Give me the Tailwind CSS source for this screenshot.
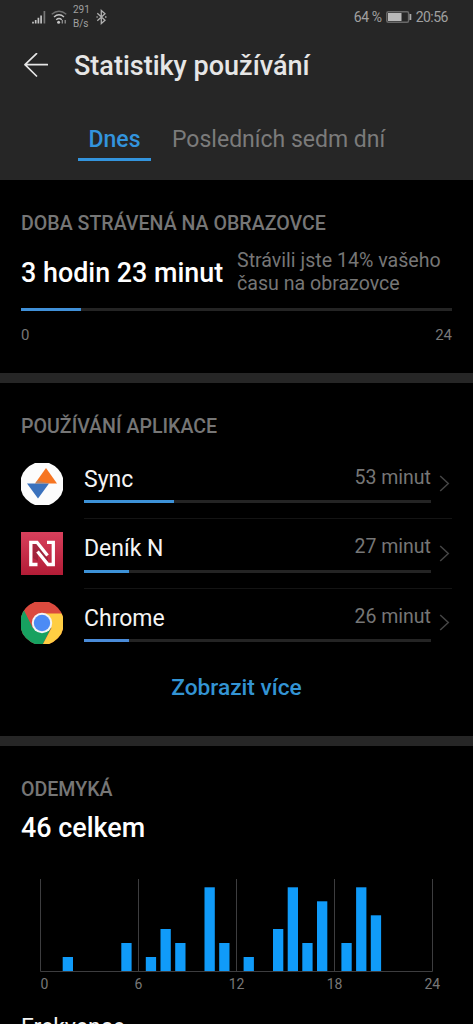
<!DOCTYPE html>
<html lang="cs">
<head>
<meta charset="utf-8">
<meta name="viewport" content="width=device-width, initial-scale=1">
<title>Statistiky používání</title>
<script src="https://cdn.jsdelivr.net/npm/@tailwindcss/browser@4"></script>
</head>
<body class="bg-black">
<div class="w-[473px] h-[1024px] overflow-hidden flex flex-col bg-black text-white font-['Roboto',sans-serif] whitespace-nowrap">

  <header class="h-[180px] shrink-0 bg-[#262626] flex flex-col">
    <div class="h-[34px] flex items-center justify-between pl-8 pr-[25px] text-[#a0a0a0]">
      <div class="flex items-center">
        <svg class="w-[15px] h-4" viewBox="0 0 15 16" fill="none" stroke-width="1.7"><path stroke="#c4c4c4" d="M1 14.5v-1.7M3.7 14.5v-3.6M6.4 14.5V8.7M9.1 14.5V6.4"/><path stroke="#777" d="M12.4 14.5V2"/></svg>
        <svg class="ml-1 w-4 h-4" viewBox="0 0 16 16" fill="none" stroke-width="1.4"><path stroke="#707070" d="M.7 5.2Q8-.8 15.3 5.2"/><path stroke="#c4c4c4" d="M3 8Q8 3.5 13 8M5.2 10.7Q8 8.2 10.8 10.7"/><circle cx="7.6" cy="13.2" r="1.5" fill="#c4c4c4"/><path stroke="#999" stroke-width="1.2" d="M11.3 11v3.5M14.2 11v3.5"/></svg>
        <div class="ml-[6px] w-[17px] text-[10px] leading-[14px] flex flex-col"><span>291</span><span>B/s</span></div>
        <svg class="ml-[6px] w-[11px] h-4" viewBox="0 0 11 16" fill="none" stroke="#b0b0b0" stroke-width="1.3"><path d="M1.3 4.3 9 11.2 5.3 14.5v-13L9 4.8 1.3 11.7M.5 8h1.2M9 8h1.5"/></svg>
      </div>
      <div class="flex items-center text-[14px] leading-[16px]">
        <span class="tracking-[-0.4px]">64 %</span>
        <svg class="ml-1 w-[26px] h-3" viewBox="0 0 26 12"><rect x=".8" y=".8" width="21.8" height="10.4" rx="1.5" fill="none" stroke="#686868" stroke-width="1.5"/><rect x="2" y="2" width="13.5" height="8" fill="#b8b8b8"/><rect x="23.5" y="3" width="1.8" height="6" fill="#aaa"/></svg>
        <span class="ml-[4px] tracking-[-0.5px]">20:56</span>
      </div>
    </div>
    <div class="h-[64px] flex items-center pl-6">
      <svg class="w-6 h-6 -mt-[2px]" viewBox="0 0 24 24" fill="none" stroke="#e6e6e6" stroke-width="1.7" stroke-linecap="round" stroke-linejoin="round"><path d="M23.500 11.700H1M12.500.7 1 11.700 12.500 23"/></svg>
      <h1 class="ml-[26px] text-[27px] leading-[32px] font-medium text-[#e6e6e6]">Statistiky používání</h1>
    </div>
    <nav class="h-[63px] flex items-end pl-[78px] text-[23px] leading-[28px]">
      <div class="w-[73px] h-[35px] border-b-[3px] border-[#3394dd] text-center font-medium text-[#3394dd]">Dnes</div>
      <div class="ml-[21px] h-[35px] text-[#7b7b7b]">Posledních sedm dní</div>
    </nav>
  </header>

  <section class="h-[193px] shrink-0 pl-[21px] pr-[21px] pt-[34px] flex flex-col">
    <h2 class="text-[19.6px] leading-[20px] font-medium text-[#767676]">DOBA STRÁVENÁ NA OBRAZOVCE</h2>
    <div class="mt-[15px] h-[46px] flex items-center">
      <div class="w-[216px] pt-px text-[26.9px] leading-[32px] font-medium">3 hodin 23 minut</div>
      <div class="text-[19.6px] leading-[23px] text-[#767676]">Strávili jste 14% vašeho<br>času na obrazovce</div>
    </div>
    <div class="mt-[13px] h-[3px] bg-[#242424]"><div class="w-[60px] h-[3px] bg-[#4090d8]"></div></div>
    <div class="mt-[15px] flex justify-between text-[15px] leading-[18px] text-[#777]"><span>0</span><span>24</span></div>
  </section>
  <div class="h-[10px] shrink-0 bg-[#262626]"></div>

  <section class="h-[353px] shrink-0 px-[21px] pt-[34px] flex flex-col">
    <h2 class="text-[19.6px] leading-[20px] font-medium text-[#767676]">POUŽÍVÁNÍ APLIKACE</h2>

    <div class="mt-[12px] h-[70px] flex">
      <svg class="mt-[14px] w-[42px] h-[42px]" viewBox="0 0 42 42"><path fill="#fcfcfc" d="M14 0h14q5 2 9 6t5 9v12q-1 5-5 9t-9 6H14q-5-2-9-6t-5-9V15q1-5 5-9t9-6z"/><path fill="#f67522" d="M25 5 36 20.500H14z"/><path fill="#3b72bd" d="M6 20.500h22L17 35.500z"/><path fill="#9d8a86" d="M14 20.500 16.500 17.500 28 20.500z" opacity=".6"/></svg>
      <div class="ml-[21px] flex-1 border-b border-[#141414] flex">
        <div class="w-[347px] flex flex-col">
          <div class="pt-[15px] h-[51px] flex justify-between"><span class="text-[23px] leading-[32px] text-[#f4f4f4]">Sync</span><span class="text-[19.5px] leading-[28px] text-[#767676]">53 minut</span></div>
          <div class="h-[3px] bg-[#242424]"><div class="w-[90px] h-[3px] bg-[#3d92d8]"></div></div>
        </div>
        <svg class="mt-[26px] ml-[8px] w-[11px] h-[17px]" viewBox="0 0 11 17" fill="none" stroke="#454545" stroke-width="1.5"><path d="M1.2 1 9.3 8.500 1.2 16"/></svg>
      </div>
    </div>

    <div class="h-[70px] flex">
      <svg class="mt-[13px] w-[42px] h-[43px]" viewBox="0 0 42 43"><defs><linearGradient id="n" x2="0" y2="1"><stop stop-color="#d8405c"/><stop offset="1" stop-color="#b31c36"/></linearGradient></defs><path fill="url(#n)" d="M0 0h42v43H0z"/><path fill="#7e1c30" d="M12 12h4l11 14v4L17 19v10l-5-3z" opacity=".5"/><path fill="none" stroke="#fff" stroke-width="3.3" d="M16.500 32.500H9.800V10.300H16L26.500 23.500M26 10.300H32.300V32.500H27L16.500 19.500"/></svg>
      <div class="ml-[21px] flex-1 border-b border-[#141414] flex">
        <div class="w-[347px] flex flex-col">
          <div class="pt-[14px] h-[51px] flex justify-between"><span class="text-[23px] leading-[32px] text-[#f4f4f4]">Deník N</span><span class="text-[19.5px] leading-[28px] text-[#767676]">27 minut</span></div>
          <div class="h-[3px] bg-[#242424]"><div class="w-[45px] h-[3px] bg-[#3d92d8]"></div></div>
        </div>
        <svg class="mt-[26px] ml-[8px] w-[11px] h-[17px]" viewBox="0 0 11 17" fill="none" stroke="#454545" stroke-width="1.5"><path d="M1.2 1 9.3 8.500 1.2 16"/></svg>
      </div>
    </div>

    <div class="h-[70px] flex">
      <svg class="mt-[13px] w-[42px] h-[42px]" viewBox="0 0 42 42"><defs><clipPath id="c"><path d="M14 0h14q5 2 9 6t5 9v12q-1 5-5 9t-9 6H14q-5-2-9-6t-5-9V15q1-5 5-9t9-6z"/></clipPath></defs><g clip-path="url(#c)"><path fill="#db4a3e" d="M0 0h42v43H0z"/><path fill="#17a160" d="M0 0v43h21.500L30 26 12 26 3 8z"/><path fill="#db4a3e" d="M3 8 12 26 21 11 21 0H0z"/><path fill="#ffce43" d="M21 11.500H42V43H21.500L30.500 26z"/></g><circle cx="21" cy="21" r="10.200" fill="#f4f4f4"/><circle cx="21" cy="21" r="8.200" fill="#4c8bf5"/></svg>
      <div class="ml-[21px] flex-1 flex">
        <div class="w-[347px] flex flex-col">
          <div class="pt-[14px] h-[50px] flex justify-between"><span class="text-[23px] leading-[32px] text-[#f4f4f4]">Chrome</span><span class="text-[19.5px] leading-[28px] text-[#767676]">26 minut</span></div>
          <div class="h-[3px] bg-[#242424]"><div class="w-[45px] h-[3px] bg-[#4a8bd8]"></div></div>
        </div>
        <svg class="mt-[25px] ml-[8px] w-[11px] h-[17px]" viewBox="0 0 11 17" fill="none" stroke="#454545" stroke-width="1.5"><path d="M1.2 1 9.3 8.500 1.2 16"/></svg>
      </div>
    </div>
    <div class="mt-[15px] text-center text-[22.7px] leading-[28px] font-medium text-[#3394d4]">Zobrazit více</div>
  </section>
  <div class="h-[10px] shrink-0 bg-[#262626]"></div>

  <section class="flex-1 min-h-0 overflow-hidden flex flex-col pl-[21px] pt-[34px]">
    <h2 class="text-[19.6px] leading-[20px] font-medium text-[#767676] shrink-0">ODEMYKÁ</h2>
    <div class="mt-[12px] text-[26.9px] leading-[32px] font-medium shrink-0">46 celkem</div>
    <svg class="mt-[32px] w-[431px] h-[118px] shrink-0" viewBox="21 876 431 118">
      <path fill="none" stroke="#3d3d3f" d="M40.500 879v92.500h392V879M138.500 879v92M236.500 879v92M334.500 879v92"/>
      <g fill="#109bf9">
        <rect x="62.700" y="957" width="10.300" height="14"/>
        <rect x="121.300" y="943" width="10.300" height="28"/>
        <rect x="145.800" y="957" width="10.300" height="14"/>
        <rect x="160.500" y="929" width="10.300" height="42"/>
        <rect x="175.200" y="943" width="10.300" height="28"/>
        <rect x="204.500" y="887.300" width="10.300" height="83.700"/>
        <rect x="219.200" y="943" width="10.300" height="28"/>
        <rect x="243.600" y="957" width="10.300" height="14"/>
        <rect x="273" y="929" width="10.300" height="42"/>
        <rect x="287.700" y="887.300" width="10.300" height="83.700"/>
        <rect x="302.300" y="943" width="10.300" height="28"/>
        <rect x="317" y="901.300" width="10.300" height="69.700"/>
        <rect x="341.400" y="943" width="10.300" height="28"/>
        <rect x="356.100" y="887.300" width="10.300" height="83.700"/>
        <rect x="370.800" y="915.300" width="10.300" height="55.700"/>
      </g>
      <g fill="#777" font-size="14" text-anchor="middle">
        <text x="44.500" y="989">0</text><text x="138.500" y="989">6</text><text x="236.500" y="989">12</text><text x="334.500" y="989">18</text><text x="432.300" y="989">24</text>
      </g>
    </svg>
    <div class="mt-[18px] text-[23px] leading-[32px] text-[#f4f4f4] shrink-0">Frekvence</div>
  </section>
</div>
</body>
</html>
